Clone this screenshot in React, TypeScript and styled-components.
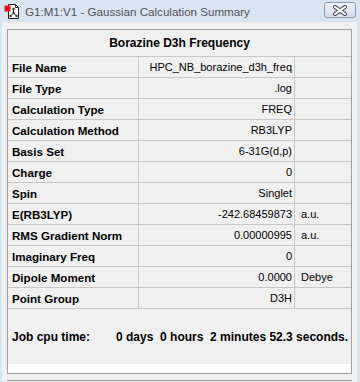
import styled, { createGlobalStyle } from "styled-components";

interface Row {
  label: string;
  value: string;
  unit?: string;
}

const rows: Row[] = [
  { label: "File Name", value: "HPC_NB_borazine_d3h_freq" },
  { label: "File Type", value: ".log" },
  { label: "Calculation Type", value: "FREQ" },
  { label: "Calculation Method", value: "RB3LYP" },
  { label: "Basis Set", value: "6-31G(d,p)" },
  { label: "Charge", value: "0" },
  { label: "Spin", value: "Singlet" },
  { label: "E(RB3LYP)", value: "-242.68459873", unit: "a.u." },
  { label: "RMS Gradient Norm", value: "0.00000995", unit: "a.u." },
  { label: "Imaginary Freq", value: "0" },
  { label: "Dipole Moment", value: "0.0000", unit: "Debye" },
  { label: "Point Group", value: "D3H" },
];

const GlobalStyle = createGlobalStyle`
  body {
    margin: 0;
    background: #ffffff;
    font-family: "Liberation Sans", Arial, sans-serif;
  }
`;

const Window = styled.div`
  width: 360px;
  height: 382px;
  background: #d9e4f1;
  display: flex;
  flex-direction: column;
  overflow: hidden;
`;

const TitleBar = styled.div`
  height: 22px;
  flex-shrink: 0;
  display: flex;
  align-items: center;
  padding-left: 4px;
  gap: 4px;
`;

const Title = styled.span`
  flex: 1;
  font-family: "Liberation Sans", Arial, sans-serif;
  font-size: 11.6px;
  color: #50555d;
`;

const CloseButton = styled.div`
  width: 30px;
  height: 14px;
  margin-right: 4px;
  margin-top: 2px;
  align-self: flex-start;
  border: 1px solid #8d9aab;
  border-radius: 3px;
  background: linear-gradient(#eef2f8, #d3dcea);
  display: flex;
  align-items: center;
  justify-content: center;
`;

const Body = styled.div`
  flex: 1;
  min-height: 0;
  overflow: hidden;
  margin: 0 3px 0 2px;
  background: #f0f0f0;
  padding: 7px 5px 0 5px;
  display: flex;
  flex-direction: column;
`;

const Panel = styled.div`
  width: 345px;
  flex-shrink: 0;
  box-sizing: border-box;
  border: 1px solid #a0a0a0;
  display: flex;
  flex-direction: column;
`;

const Header = styled.div`
  height: 26px;
  flex-shrink: 0;
  border-bottom: 1px solid #c8c8c8;
  display: flex;
  align-items: center;
  justify-content: center;
  font-weight: bold;
  font-size: 12px;
  color: #000;
`;

const TableRow = styled.div`
  height: 20px;
  flex-shrink: 0;
  border-bottom: 1px solid #c8c8c8;
  display: grid;
  grid-template-columns: 131px 156px 56px;
  font-size: 11px;
  color: #000;
`;

const Cell = styled.div<{ $align?: "left" | "right" }>`
  display: flex;
  align-items: center;
  justify-content: ${(p) => (p.$align === "right" ? "flex-end" : "flex-start")};
  border-right: 1px solid #c8c8c8;
  white-space: nowrap;
  &:last-child {
    border-right: none;
  }
`;

const LabelCell = styled(Cell)`
  padding-left: 4px;
  font-weight: bold;
  font-size: 11.6px;
`;

const ValueCell = styled(Cell)`
  padding-right: 2px;
`;

const UnitCell = styled(Cell)`
  padding-left: 6px;
`;

const JobTime = styled.div`
  height: 55px;
  flex-shrink: 0;
  display: flex;
  align-items: center;
  padding-left: 4px;
  font-weight: bold;
  font-size: 12px;
  white-space: pre;
  color: #000;
`;

const JobValue = styled.span`
  margin-left: 26px;
`;

const WhiteStrip = styled.div`
  height: 9px;
  flex-shrink: 0;
  background: #ffffff;
`;

const NextPanel = styled.div`
  width: 345px;
  flex-shrink: 0;
  margin-top: 6px;
  height: 10px;
  box-sizing: border-box;
  border-top: 1px solid #a0a0a0;
`;

function AppIcon() {
  return (
    <svg width="17" height="17" viewBox="0 0 17 17">
      <path d="M4.5 1.5h7l3 3v11h-10z" fill="#fff" stroke="#222" />
      <path d="M11.5 1.5v3h3" fill="none" stroke="#222" />
      <rect x="0.5" y="2.5" width="6" height="6" fill="#e8141b" />
      <line x1="9.5" y1="6" x2="9.5" y2="10" stroke="#333" />
      <line x1="9.5" y1="10" x2="6.5" y2="13" stroke="#333" />
      <line x1="9.5" y1="10" x2="12.5" y2="13" stroke="#333" />
      <circle cx="9.5" cy="6" r="1.2" fill="#333" />
      <circle cx="9.5" cy="10" r="1.2" fill="#333" />
      <circle cx="6.5" cy="13" r="1.2" fill="#333" />
      <circle cx="12.5" cy="13" r="1.2" fill="#333" />
    </svg>
  );
}

function CloseGlyph() {
  return (
    <svg width="16" height="11" viewBox="0 0 16 11">
      <path
        d="M3 2L13 9M13 2L3 9"
        stroke="#4f5866"
        strokeWidth="4"
        strokeLinecap="round"
      />
      <path
        d="M3 2L13 9M13 2L3 9"
        stroke="#ffffff"
        strokeWidth="2"
        strokeLinecap="round"
      />
    </svg>
  );
}

export default function App() {
  return (
    <>
      <GlobalStyle />
      <Window>
        <TitleBar>
          <AppIcon />
          <Title>G1:M1:V1 - Gaussian Calculation Summary</Title>
          <CloseButton>
            <CloseGlyph />
          </CloseButton>
        </TitleBar>
        <Body>
          <Panel>
            <Header>Borazine D3h Frequency</Header>
            {rows.map((row) => (
              <TableRow key={row.label}>
                <LabelCell>{row.label}</LabelCell>
                <ValueCell $align="right">{row.value}</ValueCell>
                <UnitCell>{row.unit ?? ""}</UnitCell>
              </TableRow>
            ))}
            <JobTime>
              Job cpu time:
              <JobValue>{"0 days  0 hours  2 minutes 52.3 seconds."}</JobValue>
            </JobTime>
            <WhiteStrip />
          </Panel>
          <NextPanel />
        </Body>
      </Window>
    </>
  );
}
